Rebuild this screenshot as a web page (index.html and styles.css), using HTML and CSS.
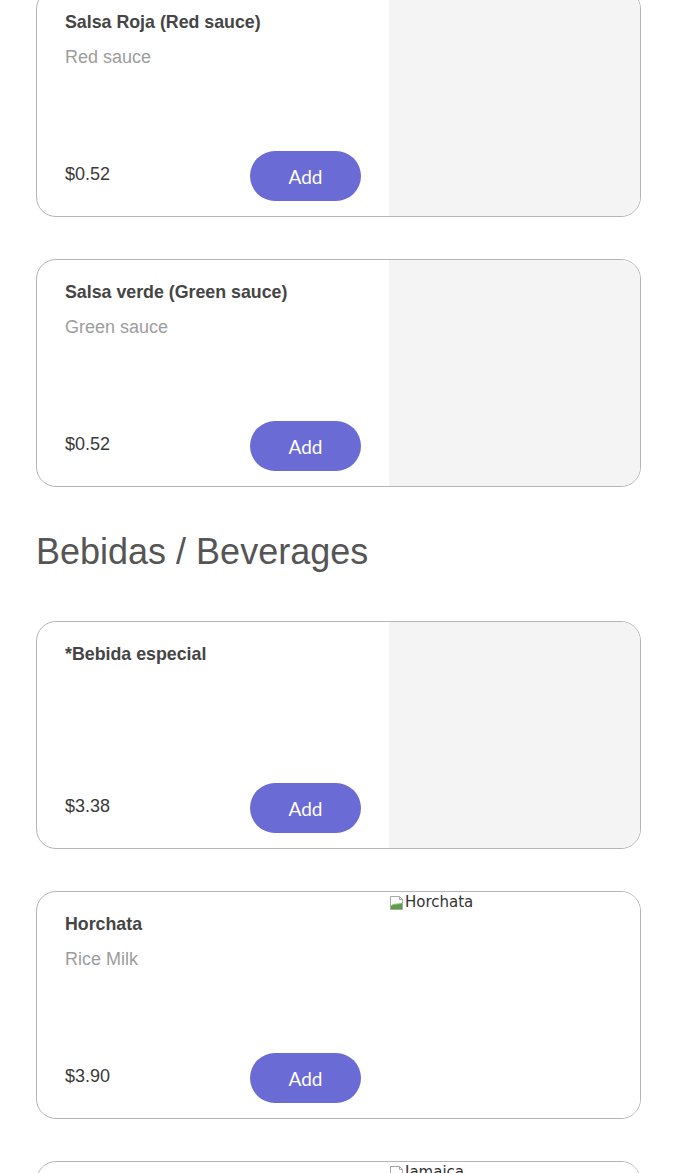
FILE: index.html
```html
<!DOCTYPE html>
<html lang="en">
<head>
    <meta charset="UTF-8">
    <meta name="viewport" content="width=device-width, initial-scale=1.0">
    <title>Menu</title>
    <link rel="stylesheet" href="styles.css">
</head>
<body>
    <div class="menu">
        <div class="item-card">
            <div class="item-info">
                <h3 class="item-name">Salsa Roja (Red sauce)</h3>
                <p class="item-desc">Red sauce</p>
                <div class="item-footer">
                    <span class="item-price">$0.52</span>
                    <button class="add-btn">Add</button>
                </div>
            </div>
            <div class="item-img"></div>
        </div>

        <div class="item-card">
            <div class="item-info">
                <h3 class="item-name">Salsa verde (Green sauce)</h3>
                <p class="item-desc">Green sauce</p>
                <div class="item-footer">
                    <span class="item-price">$0.52</span>
                    <button class="add-btn">Add</button>
                </div>
            </div>
            <div class="item-img"></div>
        </div>

        <h2 class="section-title">Bebidas / Beverages</h2>

        <div class="item-card">
            <div class="item-info">
                <h3 class="item-name">*Bebida especial</h3>
                <p class="item-desc"></p>
                <div class="item-footer">
                    <span class="item-price">$3.38</span>
                    <button class="add-btn">Add</button>
                </div>
            </div>
            <div class="item-img"></div>
        </div>

        <div class="item-card">
            <div class="item-info">
                <h3 class="item-name">Horchata</h3>
                <p class="item-desc">Rice Milk</p>
                <div class="item-footer">
                    <span class="item-price">$3.90</span>
                    <button class="add-btn">Add</button>
                </div>
            </div>
            <div class="item-img broken">
                <span class="alt-text">
                    <svg width="16" height="16" viewBox="0 0 16 16"><path d="M1.5 1.5h9l3 3v10h-12z" fill="#fff" stroke="#a8a8a8"/><path d="M10.5 1.5v3h3" fill="none" stroke="#a8a8a8"/><path d="M2 14V11c3-3 6-1 11-3v6z" fill="#5c9e48"/><path d="M2 11c3-3 6-1 11-3" fill="none" stroke="#8cc07a"/></svg>Horchata
                </span>
            </div>
        </div>

        <div class="item-card">
            <div class="item-info">
                <h3 class="item-name">Jamaica</h3>
                <p class="item-desc">Hibiscus</p>
                <div class="item-footer">
                    <span class="item-price">$3.90</span>
                    <button class="add-btn">Add</button>
                </div>
            </div>
            <div class="item-img broken">
                <span class="alt-text">
                    <svg width="16" height="16" viewBox="0 0 16 16"><path d="M1.5 1.5h9l3 3v10h-12z" fill="#fff" stroke="#a8a8a8"/><path d="M10.5 1.5v3h3" fill="none" stroke="#a8a8a8"/><path d="M2 14V11c3-3 6-1 11-3v6z" fill="#5c9e48"/><path d="M2 11c3-3 6-1 11-3" fill="none" stroke="#8cc07a"/></svg>Jamaica
                </span>
            </div>
        </div>
    </div>
</body>
</html>
```

FILE: styles.css
```css
body {
  margin: 0;
  background-color: #fff;
  font-family: "Liberation Sans", Arial, sans-serif;
}

.menu {
  margin-block-start: -11px;
  padding: 0 36px;
}

.item-card {
  display: flex;
  block-size: 228px;
  box-sizing: border-box;
  border: 1px solid #b5b5b5;
  border-radius: 20px;
  overflow: hidden;
  margin-block-end: 42px;
}

.item-info {
  display: flex;
  flex-direction: column;
  inline-size: 352px;
  box-sizing: border-box;
  padding: 21px 28px 15px 28px;
}

.item-name {
  margin: 0;
  font-size: 17.8px;
  font-weight: bold;
  color: #454545;
  line-height: 22px;
}

.item-desc {
  margin: 13px 0 0 0;
  font-size: 18px;
  color: #9d9d9d;
  line-height: 22px;
}

.item-footer {
  margin-block-start: auto;
  display: flex;
  justify-content: space-between;
  align-items: center;
}

.item-price {
  font-size: 18px;
  color: #3a3a3a;
  margin-block-start: -3px;
}

.add-btn {
  inline-size: 111px;
  block-size: 50px;
  border: none;
  border-radius: 25px;
  background-color: #6b6bd6;
  color: #fff;
  font-family: Lato, sans-serif;
  font-weight: 400;
  font-size: 19px;
}

.item-img {
  flex: 1;
  background-color: #f4f4f4;
}

.item-img.broken {
  background-color: #fff;
}

.alt-text {
  display: flex;
  align-items: center;
  font-family: "DejaVu Sans", sans-serif;
  font-size: 15px;
  color: #333;
  line-height: 21px;
}

.section-title {
  margin: 45px 0 49px 0;
  font-size: 36px;
  font-weight: normal;
  color: #555;
  line-height: 40px;
}
```
